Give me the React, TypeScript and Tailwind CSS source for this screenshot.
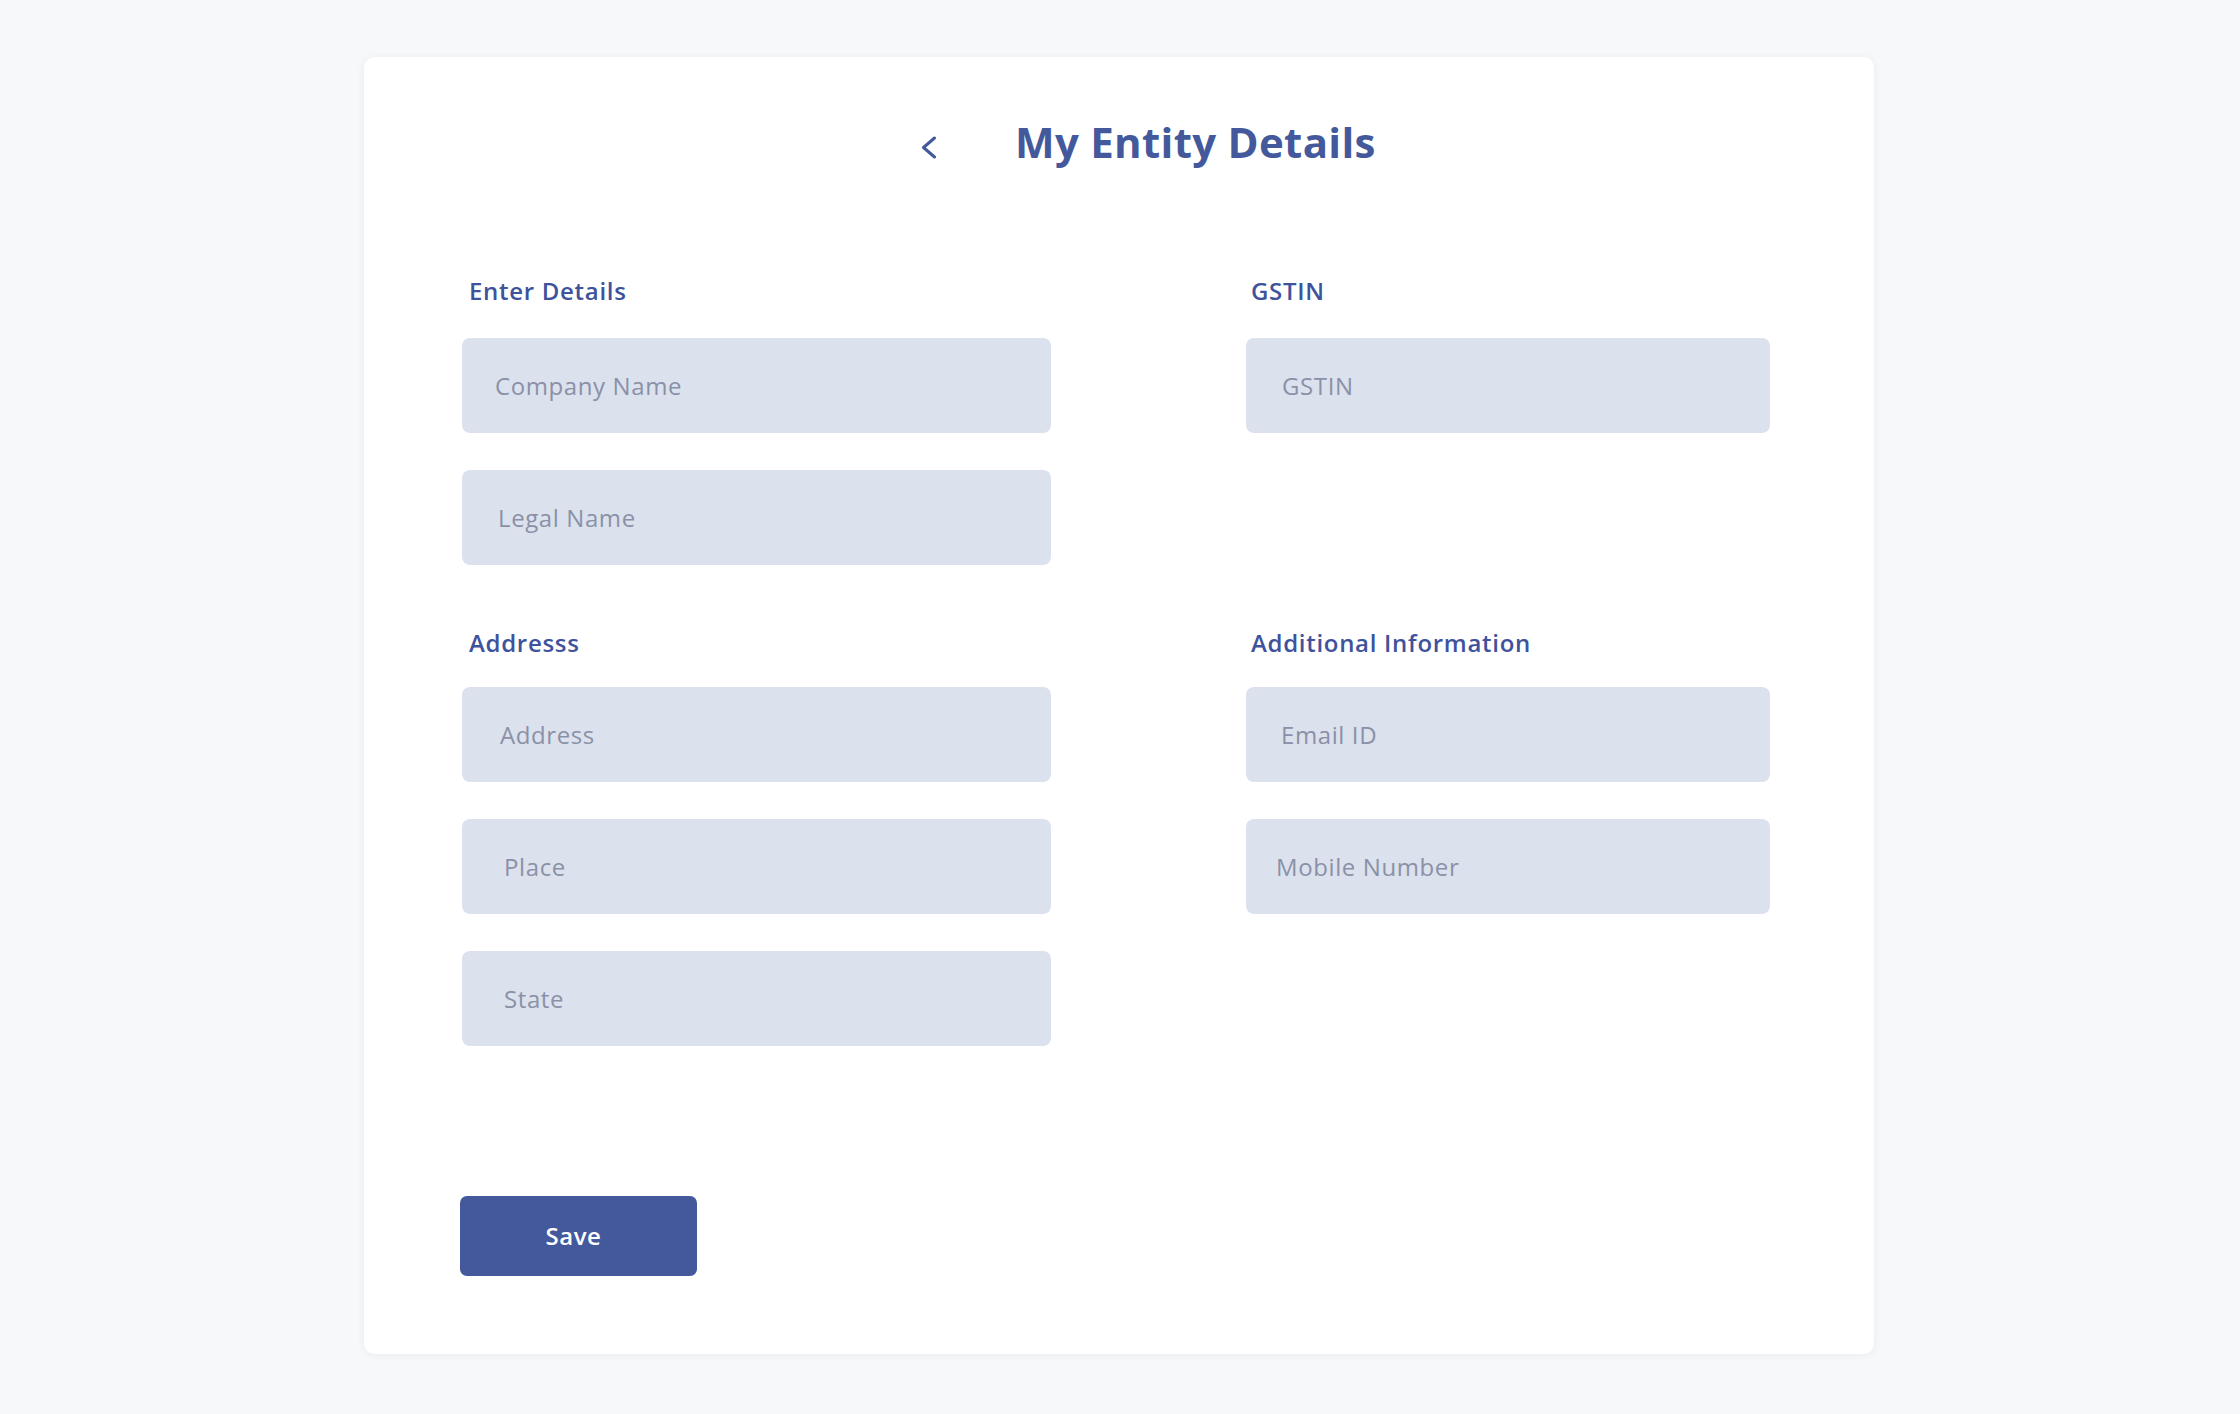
import { useState } from 'react'

// Entity details form: two column card with grouped inputs and a save button

type Field = {
  name: string
  placeholder: string
  pad: string
}

const LEFT_TOP: Field[] = [
  { name: 'companyName', placeholder: 'Company Name', pad: 'pl-[33px]' },
  { name: 'legalName', placeholder: 'Legal Name', pad: 'pl-[36px]' },
]
const RIGHT_TOP: Field[] = [{ name: 'gstin', placeholder: 'GSTIN', pad: 'pl-[36px]' }]
const LEFT_BOTTOM: Field[] = [
  { name: 'address', placeholder: 'Address', pad: 'pl-[38px]' },
  { name: 'place', placeholder: 'Place', pad: 'pl-[42px]' },
  { name: 'state', placeholder: 'State', pad: 'pl-[42px]' },
]
const RIGHT_BOTTOM: Field[] = [
  { name: 'email', placeholder: 'Email ID', pad: 'pl-[35px]' },
  { name: 'mobile', placeholder: 'Mobile Number', pad: 'pl-[30px]' },
]

function SectionLabel({ children, className = '' }: { children: string; className?: string }) {
  return (
    <div className={`text-[24px] leading-[24px] font-semibold tracking-[0.7px] text-[#3e539b] ${className}`}>
      {children}
    </div>
  )
}

function FieldList({
  fields,
  values,
  onChange,
  width,
}: {
  fields: Field[]
  values: Record<string, string>
  onChange: (name: string, value: string) => void
  width: string
}) {
  return (
    <div className={`flex flex-col gap-[37px] ${width}`}>
      {fields.map((f) => (
        <input
          key={f.name}
          type="text"
          value={values[f.name] ?? ''}
          onChange={(e) => onChange(f.name, e.target.value)}
          placeholder={f.placeholder}
          className={`h-[95px] w-full rounded-[8px] bg-[#dce1ee] ${f.pad} text-[24px] tracking-[0.6px] text-[#4a5068] placeholder:text-[#8a91a7] outline-none`}
        />
      ))}
    </div>
  )
}

export default function App() {
  const [values, setValues] = useState<Record<string, string>>({})

  function handleChange(name: string, value: string) {
    setValues((v) => ({ ...v, [name]: value }))
  }

  return (
    <div className="min-h-[1414px] bg-[#f7f8fa] pt-[57px] font-['Open_Sans',sans-serif]">
      <div className="ml-[364px] h-[1297px] w-[1510px] rounded-[10px] bg-white pt-[64px] shadow-[0_1px_8px_rgba(30,40,80,0.06)]">
        {/* Header */}
        <div className="flex items-start pl-[556px]">
          <button type="button" className="mt-[14px] text-[#44599b]">
            <svg width="17" height="24" viewBox="0 0 17 24" fill="none">
              <polyline
                points="14.5,3 3.5,12.5 14.5,22"
                stroke="currentColor"
                strokeWidth="3"
                strokeLinecap="round"
                strokeLinejoin="round"
              />
            </svg>
          </button>
          <h1 className="ml-[78px] text-[42px] leading-[42px] font-bold tracking-[0.3px] text-[#44599b]">
            My Entity Details
          </h1>
        </div>

        {/* Form */}
        <div className="mt-[116px] pl-[98px]">
          <div className="flex gap-[195px]">
            <div>
              <SectionLabel className="mb-[35px] pl-[7px]">Enter Details</SectionLabel>
              <FieldList fields={LEFT_TOP} values={values} onChange={handleChange} width="w-[589px]" />
            </div>
            <div>
              <SectionLabel className="mb-[35px] pl-[5px]">GSTIN</SectionLabel>
              <FieldList fields={RIGHT_TOP} values={values} onChange={handleChange} width="w-[524px]" />
            </div>
          </div>

          <div className="mt-[66px] flex gap-[195px]">
            <div>
              <SectionLabel className="mb-[32px] pl-[7px]">Addresss</SectionLabel>
              <FieldList fields={LEFT_BOTTOM} values={values} onChange={handleChange} width="w-[589px]" />
            </div>
            <div>
              <SectionLabel className="mb-[32px] pl-[5px]">Additional Information</SectionLabel>
              <FieldList fields={RIGHT_BOTTOM} values={values} onChange={handleChange} width="w-[524px]" />
            </div>
          </div>

          <button
            type="button"
            className="mt-[150px] -ml-[2px] h-[80px] w-[237px] rounded-[7px] bg-[#43599b] pr-[10px] text-[24px] font-semibold tracking-[0.5px] text-white"
          >
            Save
          </button>
        </div>
      </div>
    </div>
  )
}
